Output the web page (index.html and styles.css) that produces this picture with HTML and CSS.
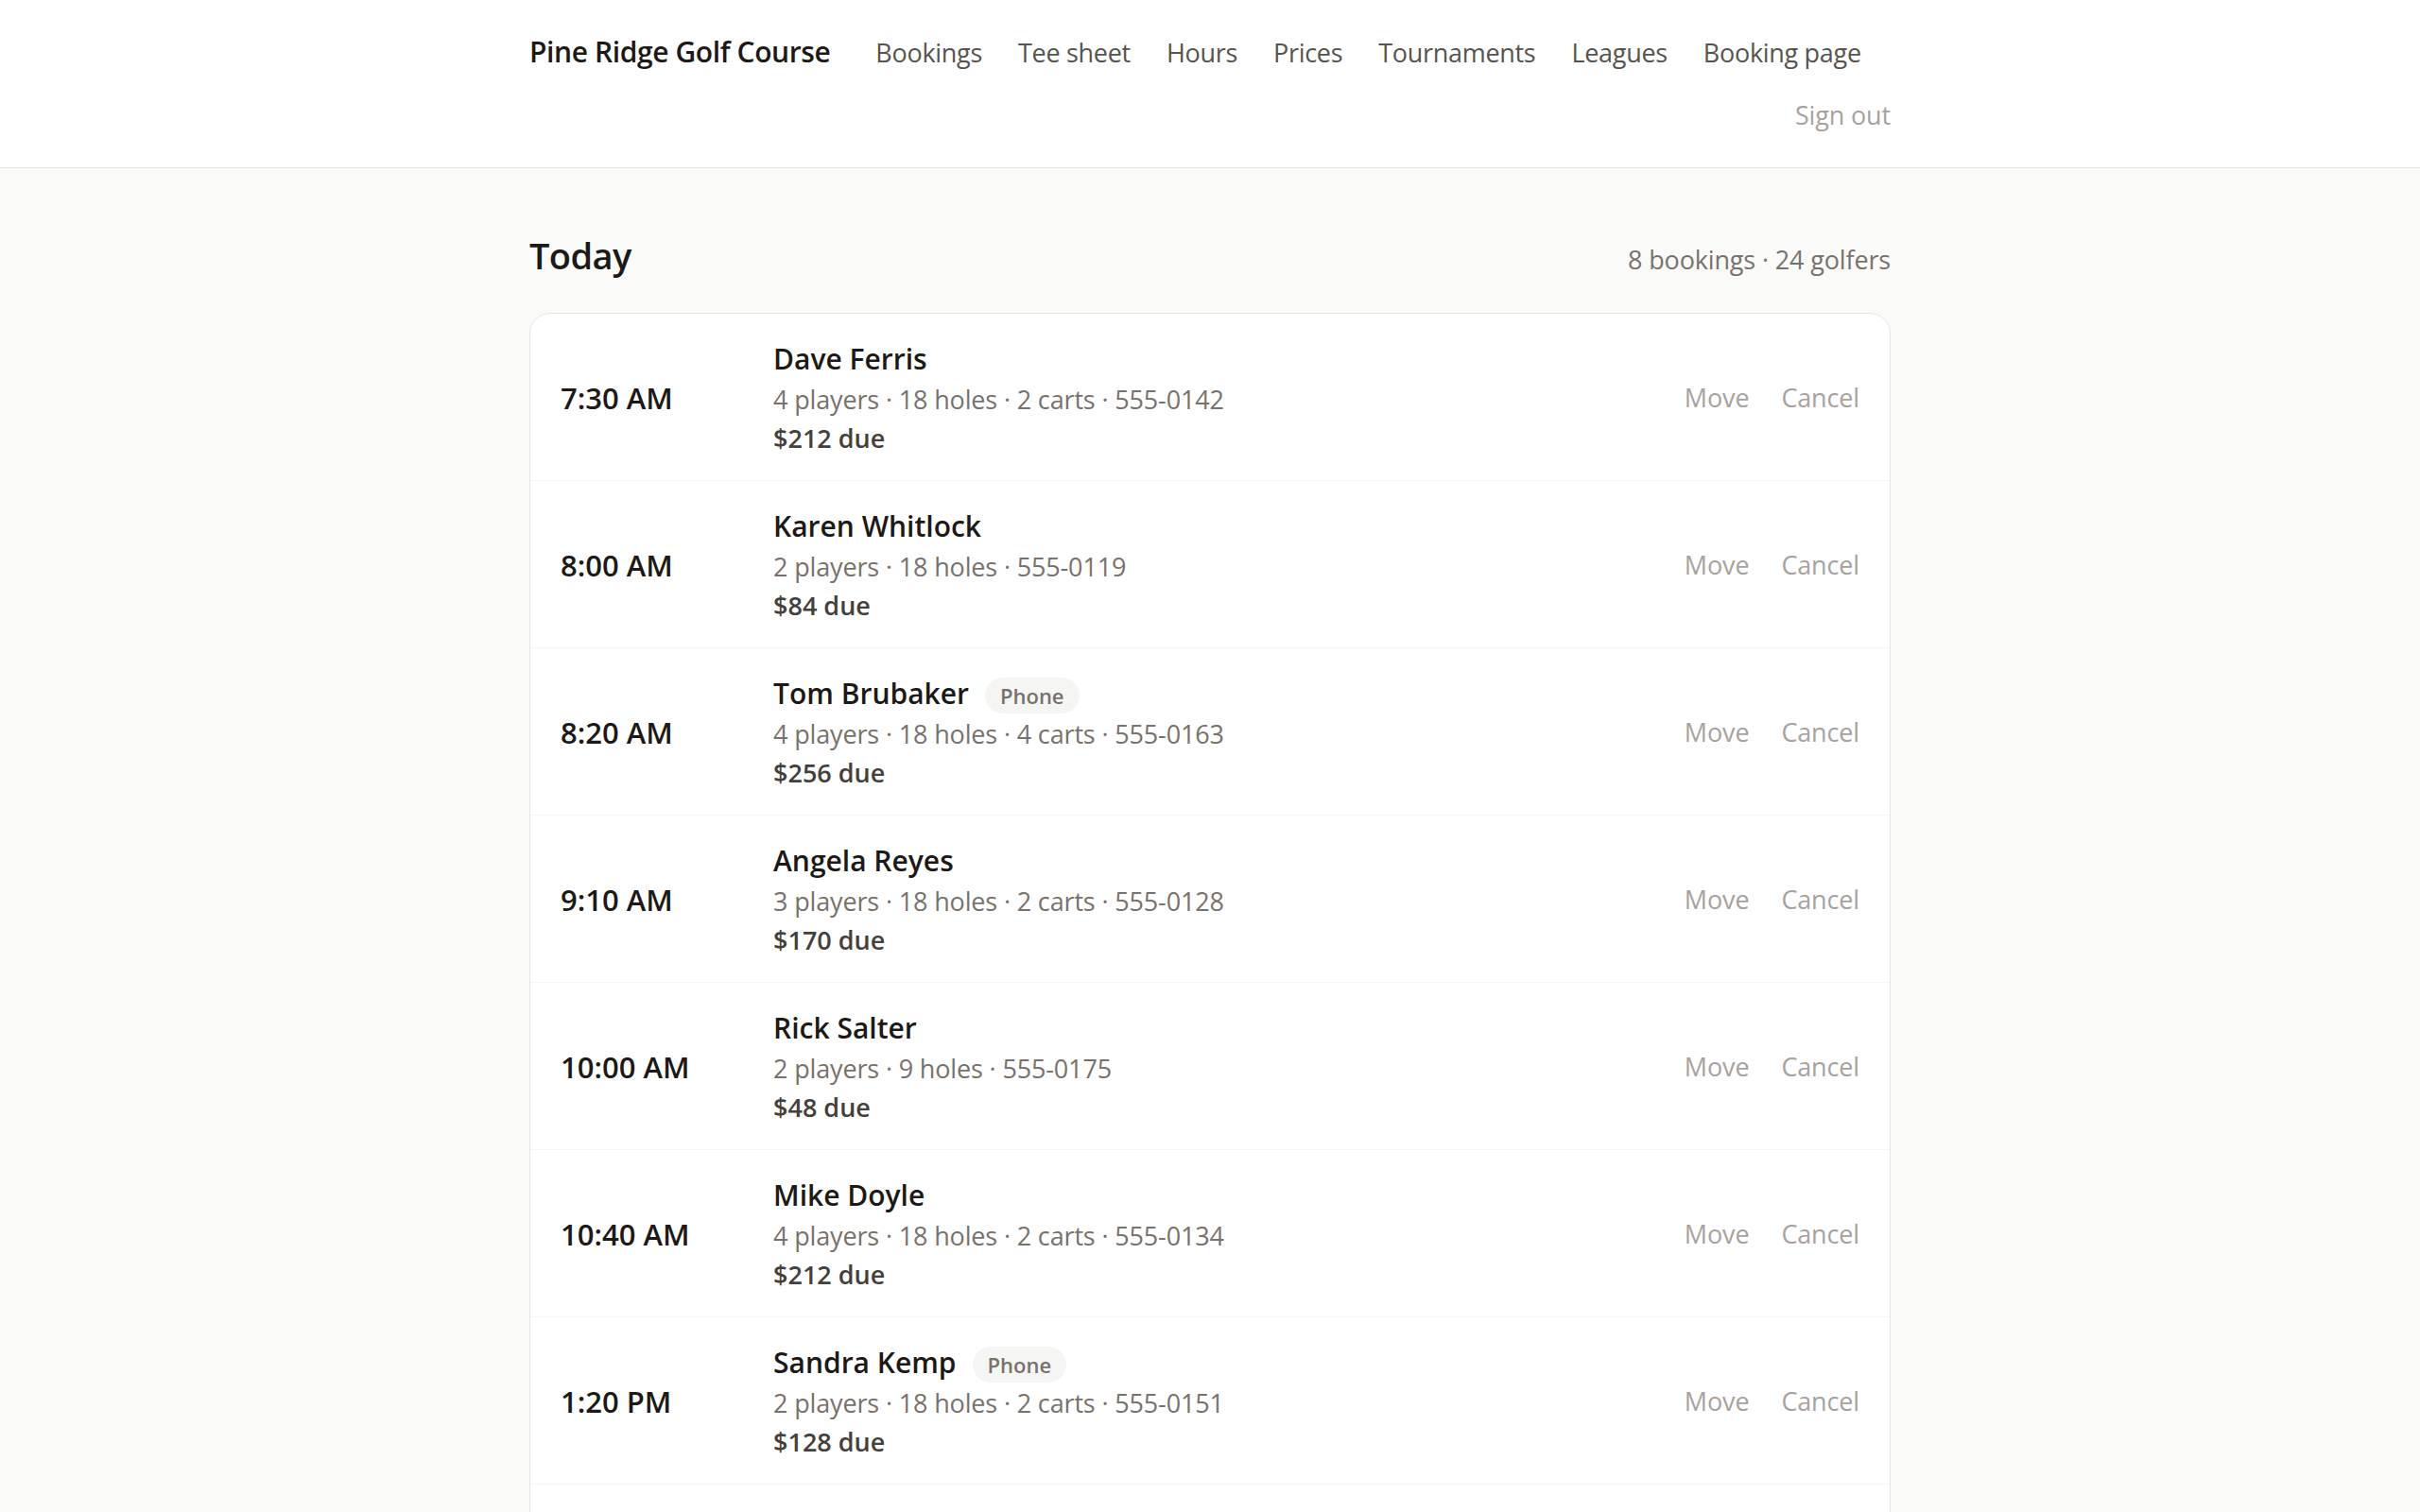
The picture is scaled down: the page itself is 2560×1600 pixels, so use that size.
FILE: index.html
```html
<!DOCTYPE html>
<html lang="en">
<head>
  <meta charset="UTF-8" />
  <title>Bookings · Pine Ridge Golf Course</title>
  <link rel="stylesheet" href="styles.css">
</head>
<body>
  <header class="site-header">
    <div class="topbar">
      <nav class="nav">
        <a class="brand" href="#">Pine Ridge Golf Course</a>
        <a class="nav-link" href="#">Bookings</a>
        <a class="nav-link" href="#">Tee sheet</a>
        <a class="nav-link" href="#">Hours</a>
        <a class="nav-link" href="#">Prices</a>
        <a class="nav-link" href="#">Tournaments</a>
        <a class="nav-link" href="#">Leagues</a>
        <a class="nav-link" href="#">Booking page</a>
      </nav>
      <a class="sign-out" href="#">Sign out</a>
    </div>
  </header>

  <main class="page">
    <div class="day-head">
      <h1>Today</h1>
      <span class="day-summary">8 bookings · 24 golfers</span>
    </div>

    <ul class="bookings">
      <li class="booking">
        <div class="time">7:30 AM</div>
        <div class="info">
          <div class="name">Dave Ferris</div>
          <div class="details">4 players · 18 holes · 2 carts · 555-0142</div>
          <div class="due">$212 due</div>
        </div>
        <div class="actions">
          <button class="action">Move</button>
          <button class="action">Cancel</button>
        </div>
      </li>
      <li class="booking">
        <div class="time">8:00 AM</div>
        <div class="info">
          <div class="name">Karen Whitlock</div>
          <div class="details">2 players · 18 holes · 555-0119</div>
          <div class="due">$84 due</div>
        </div>
        <div class="actions">
          <button class="action">Move</button>
          <button class="action">Cancel</button>
        </div>
      </li>
      <li class="booking">
        <div class="time">8:20 AM</div>
        <div class="info">
          <div class="name">Tom Brubaker <span class="badge">Phone</span></div>
          <div class="details">4 players · 18 holes · 4 carts · 555-0163</div>
          <div class="due">$256 due</div>
        </div>
        <div class="actions">
          <button class="action">Move</button>
          <button class="action">Cancel</button>
        </div>
      </li>
      <li class="booking">
        <div class="time">9:10 AM</div>
        <div class="info">
          <div class="name">Angela Reyes</div>
          <div class="details">3 players · 18 holes · 2 carts · 555-0128</div>
          <div class="due">$170 due</div>
        </div>
        <div class="actions">
          <button class="action">Move</button>
          <button class="action">Cancel</button>
        </div>
      </li>
      <li class="booking">
        <div class="time">10:00 AM</div>
        <div class="info">
          <div class="name">Rick Salter</div>
          <div class="details">2 players · 9 holes · 555-0175</div>
          <div class="due">$48 due</div>
        </div>
        <div class="actions">
          <button class="action">Move</button>
          <button class="action">Cancel</button>
        </div>
      </li>
      <li class="booking">
        <div class="time">10:40 AM</div>
        <div class="info">
          <div class="name">Mike Doyle</div>
          <div class="details">4 players · 18 holes · 2 carts · 555-0134</div>
          <div class="due">$212 due</div>
        </div>
        <div class="actions">
          <button class="action">Move</button>
          <button class="action">Cancel</button>
        </div>
      </li>
      <li class="booking">
        <div class="time">1:20 PM</div>
        <div class="info">
          <div class="name">Sandra Kemp <span class="badge">Phone</span></div>
          <div class="details">2 players · 18 holes · 2 carts · 555-0151</div>
          <div class="due">$128 due</div>
        </div>
        <div class="actions">
          <button class="action">Move</button>
          <button class="action">Cancel</button>
        </div>
      </li>
      <li class="booking">
        <div class="time">2:30 PM</div>
        <div class="info">
          <div class="name">Greg Halvorsen</div>
          <div class="details">3 players · 18 holes · 2 carts · 555-0187</div>
          <div class="due">$170 due</div>
        </div>
        <div class="actions">
          <button class="action">Move</button>
          <button class="action">Cancel</button>
        </div>
      </li>
    </ul>
  </main>
</body>
</html>
```

FILE: styles.css
```css
body {
  margin: 0;
  padding: 0;
  font-family: 'Open Sans', 'Noto Sans', sans-serif;
  background-color: #fafaf9;
  color: #1c1917;
}

a {
  text-decoration: none;
  white-space: nowrap;
}

.site-header {
  background-color: #fff;
  border-bottom: 1px solid #e7e5e4;
}

.topbar {
  width: 1440px;
  margin: 0 auto;
  padding: 34px 0;
  display: flex;
  flex-wrap: wrap;
  align-items: baseline;
  row-gap: 24px;
  line-height: 42px;
}

.nav {
  display: flex;
  flex-shrink: 0;
  align-items: baseline;
  gap: 38px;
}

.brand {
  font-size: 30px;
  font-weight: 600;
  letter-spacing: -0.4px;
  color: #1c1917;
  margin-right: 10px;
}

.nav-link {
  font-size: 27px;
  letter-spacing: -0.3px;
  color: #57534e;
}

.sign-out {
  margin-left: auto;
  font-size: 27px;
  letter-spacing: -0.15px;
  color: #a8a29e;
}

.page {
  width: 1440px;
  margin: 0 auto;
  padding: 66px 0 80px;
}

.day-head {
  display: flex;
  justify-content: space-between;
  align-items: baseline;
  margin-bottom: 35px;
}

.day-head h1 {
  margin: 0;
  font-size: 38px;
  font-weight: 600;
  line-height: 52px;
  letter-spacing: -0.6px;
}

.day-summary {
  font-size: 27px;
  letter-spacing: -0.15px;
  color: #78716c;
}

.bookings {
  list-style: none;
  margin: 0;
  padding: 0;
  background-color: #fff;
  border: 1px solid #e7e5e4;
  border-radius: 22px;
  overflow: hidden;
}

.booking {
  display: flex;
  align-items: center;
  padding: 26px 32px 24px;
  border-bottom: 1px solid #f5f5f4;
}

.booking:last-child {
  border-bottom: none;
}

.time {
  flex: 0 0 225px;
  font-size: 31px;
  font-weight: 600;
  line-height: 42px;
}

.info {
  flex: 1;
}

.name {
  display: flex;
  align-items: baseline;
  gap: 17px;
  font-size: 30px;
  font-weight: 600;
  line-height: 43px;
}

.badge {
  padding: 0 16px;
  border-radius: 999px;
  background-color: #f5f5f4;
  color: #78716c;
  font-size: 22px;
  line-height: 38px;
}

.details {
  font-size: 27px;
  letter-spacing: -0.15px;
  line-height: 43px;
  color: #78716c;
}

.due {
  font-size: 27px;
  font-weight: 600;
  line-height: 40px;
  color: #44403c;
}

.actions {
  display: flex;
  gap: 34px;
}

.action {
  padding: 0;
  border: none;
  background: none;
  font-family: inherit;
  font-size: 27px;
  letter-spacing: -0.15px;
  line-height: 42px;
  color: #a8a29e;
  cursor: pointer;
}
```
